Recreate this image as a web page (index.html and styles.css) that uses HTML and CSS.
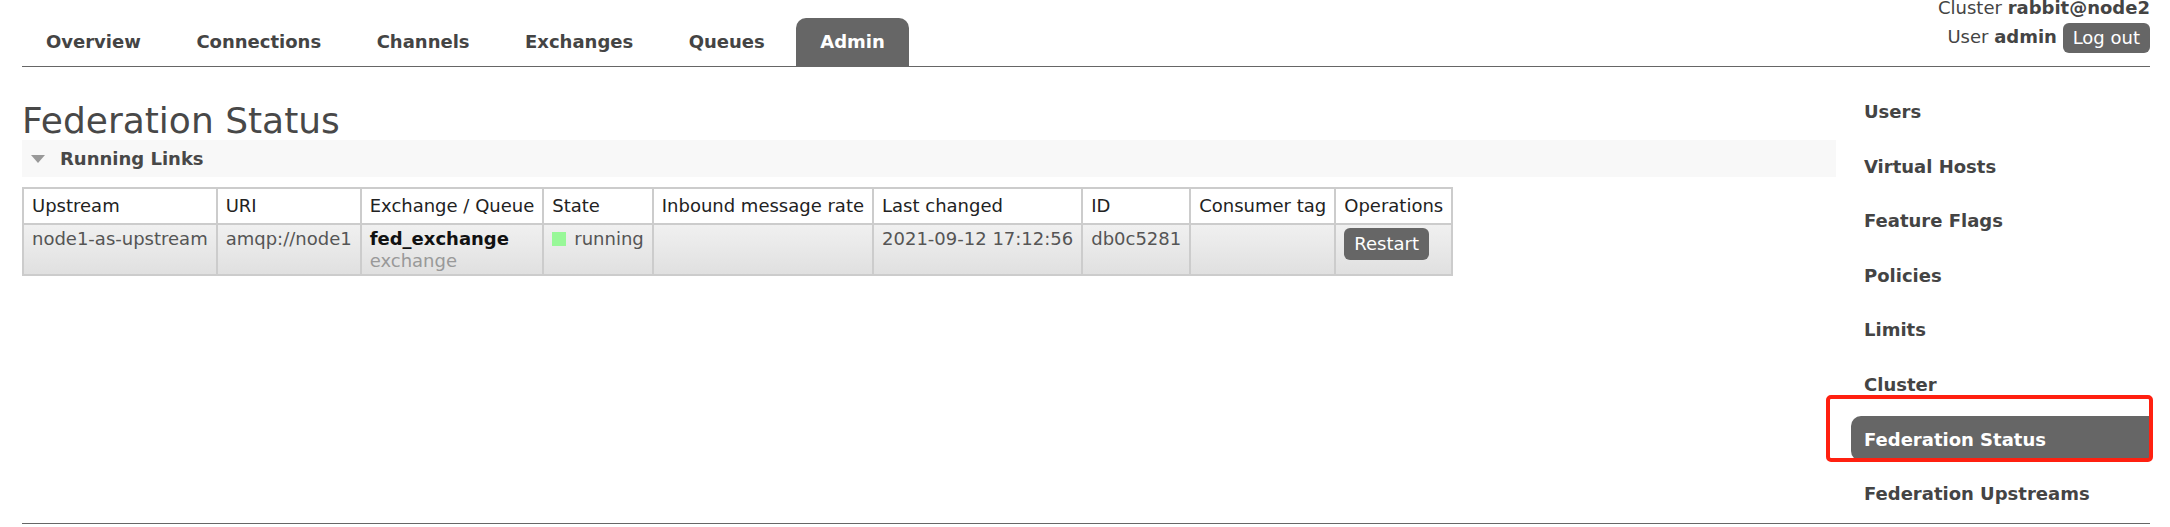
FILE: index.html
```html
<!DOCTYPE html>
<html lang="en">
<head>
<meta charset="utf-8">
<title>RabbitMQ Management - Federation Status</title>
<link rel="stylesheet" href="styles.css">
</head>
<body>
<div class="page">
  <header class="header">
    <ul class="tabs">
      <li><a href="#">Overview</a></li>
      <li><a href="#">Connections</a></li>
      <li><a href="#">Channels</a></li>
      <li><a href="#">Exchanges</a></li>
      <li><a href="#">Queues</a></li>
      <li class="selected"><a href="#">Admin</a></li>
    </ul>
    <div class="login">
      <div class="login-line">Cluster <b>rabbit@node2</b></div>
      <div class="login-line">User <b>admin</b> <button class="btn">Log out</button></div>
    </div>
  </header>

  <div class="content">
    <main class="main">
      <h1>Federation Status</h1>
      <div class="section-bar">
        <svg class="tri" width="14" height="10" viewBox="0 0 14 10"><polygon points="0,1 14,1 7,9" fill="#999"/></svg>
        <span>Running Links</span>
      </div>
      <table class="list">
        <thead>
          <tr>
            <th>Upstream</th>
            <th>URI</th>
            <th>Exchange / Queue</th>
            <th>State</th>
            <th>Inbound message rate</th>
            <th>Last changed</th>
            <th>ID</th>
            <th>Consumer tag</th>
            <th>Operations</th>
          </tr>
        </thead>
        <tbody>
          <tr>
            <td>node1-as-upstream</td>
            <td>amqp://node1</td>
            <td><b class="name">fed_exchange</b><br><span class="sub">exchange</span></td>
            <td><span class="status-ok"></span>running</td>
            <td></td>
            <td>2021-09-12 17:12:56</td>
            <td>db0c5281</td>
            <td></td>
            <td><button class="btn restart">Restart</button></td>
          </tr>
        </tbody>
      </table>
    </main>

    <nav class="sidebar">
      <ul>
        <li><a href="#">Users</a></li>
        <li><a href="#">Virtual Hosts</a></li>
        <li><a href="#">Feature Flags</a></li>
        <li><a href="#">Policies</a></li>
        <li><a href="#">Limits</a></li>
        <li><a href="#">Cluster</a></li>
        <li class="selected"><a href="#">Federation Status</a></li>
        <li><a href="#">Federation Upstreams</a></li>
      </ul>
    </nav>
  </div>

  <div class="footer"></div>
  <div class="annotation"></div>
</div>
</body>
</html>
```

FILE: styles.css
```css
* { box-sizing: border-box; }

html, body {
  margin: 0;
  padding: 0;
  background: #fff;
}

body {
  font-family: "DejaVu Sans", Verdana, sans-serif;
  font-size: 18px;
  line-height: 22px;
  color: #484848;
  overflow: hidden;
}

.page {
  position: relative;
  padding: 0 20px 0 22px;
  height: 527px;
}

a { color: inherit; text-decoration: none; }

/* Header */
.header {
  display: flex;
  justify-content: space-between;
  align-items: flex-end;
  border-bottom: 1px solid #666;
  margin-top: -3px;
}

.tabs {
  list-style: none;
  margin: 0;
  padding: 0;
  display: flex;
  gap: 7.5px;
}

.tabs a {
  display: block;
  padding: 13px 24px 13px;
  font-weight: bold;
  color: #444;
  border-radius: 10px 10px 0 0;
}

.tabs .selected a {
  background: #666;
  color: #fff;
}

.login {
  text-align: right;
  margin-bottom: 13px;
  color: #444;
}

.login-line {
  line-height: 22px;
}

.login-line + .login-line {
  margin-top: 4px;
}

.btn {
  font-family: inherit;
  font-size: 18px;
  line-height: 22px;
  color: #fff;
  background: #666;
  border: 0;
  border-radius: 6px;
  padding: 4px 10px;
  margin: 0;
  vertical-align: middle;
  cursor: pointer;
}

/* Content */
.content {
  display: flex;
  align-items: flex-start;
}

.main {
  flex: 1;
  min-width: 0;
  padding-top: 34px;
}

h1 {
  margin: 0;
  font-size: 36px;
  line-height: 39px;
  font-weight: normal;
  color: #484848;
}

.section-bar {
  display: flex;
  align-items: center;
  height: 37px;
  background: #f8f8f8;
  padding-left: 9px;
  font-weight: bold;
  color: #484848;
}

.section-bar .tri {
  margin-right: 15px;
  margin-top: 1px;
}

/* Table */
table.list {
  margin-top: 10px;
  border-collapse: collapse;
  border: 2px solid #ccc;
}

table.list th,
table.list td {
  border: 2px solid #ccc;
  padding: 0 8px;
  text-align: left;
  vertical-align: top;
  white-space: nowrap;
}

table.list th {
  font-weight: normal;
  color: #222;
  background: #fff;
  padding-top: 6px;
  padding-bottom: 6px;
}

table.list td {
  color: #555;
  background: linear-gradient(#f0f0f0, #e0e0e0);
  padding-top: 3px;
  padding-bottom: 2px;
}

.name { color: #111; }
.sub { color: #999; }

.status-ok {
  display: inline-block;
  width: 14px;
  height: 14px;
  background: #98f898;
  margin-right: 8px;
  vertical-align: -1px;
}

.restart {
  padding: 5px 10px;
  margin-top: 0;
  vertical-align: top;
}

/* Sidebar */
.sidebar {
  width: 299px;
  margin-left: 15px;
  padding-top: 21px;
}

.sidebar ul {
  list-style: none;
  margin: 0;
  padding: 0;
}

.sidebar li {
  margin-bottom: 9px;
}

.sidebar li:last-child {
  margin-bottom: 7px;
}

.sidebar a {
  display: block;
  padding: 13px 13px 10.6px;
  font-weight: bold;
  color: #444;
  border-radius: 10px 0 0 10px;
}

.sidebar .selected a {
  background: #666;
  color: #fff;
}

.footer {
  border-top: 1px solid #666;
}

/* Annotation overlay (red highlight box drawn on screenshot) */
.annotation {
  position: absolute;
  left: 1826px;
  top: 398px;
  width: 327px;
  height: 67px;
  border: 4px solid #ff2010;
  border-radius: 5px;
  pointer-events: none;
}
```
